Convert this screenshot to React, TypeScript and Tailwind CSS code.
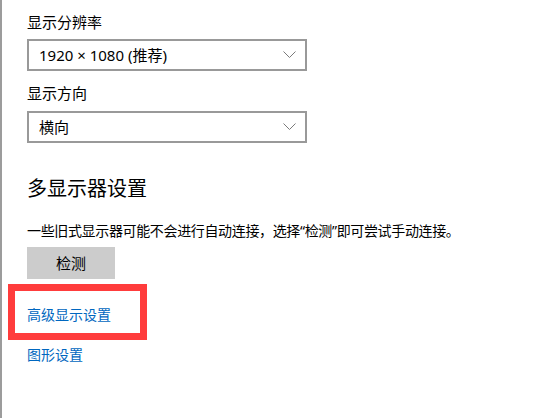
import React from 'react';

const Chevron: React.FC = () => (
  <svg width="13" height="8" viewBox="0 0 13 8" fill="none">
    <path d="M0.5 0.5 L6.5 6.5 L12.5 0.5" stroke="#7a7a7a" strokeWidth="1" />
  </svg>
);

const Select: React.FC<{ value: string; className?: string }> = ({ value, className }) => (
  <div className={`w-[280px] h-[32px] border-2 border-[#999999] flex items-center justify-between pl-[10px] pr-[9px] text-[15px] text-black ${className ?? ''}`}>
    <span className="leading-[20px]">{value}</span>
    <Chevron />
  </div>
);

const App: React.FC = () => {
  return (
    <div
      className="relative w-[535px] h-[418px] bg-white border-l-2 border-[#9c9c9c] pl-[25px] overflow-hidden"
      style={{ fontFamily: '"Noto Sans", "Noto Sans CJK SC", sans-serif' }}
    >
      <div className="pt-[12px] text-[15px] leading-[20px] text-black">显示分辨率</div>
      <Select value="1920 × 1080 (推荐)" className="mt-[7px]" />

      <div className="mt-[12px] text-[15px] leading-[20px] text-black">显示方向</div>
      <Select value="横向" className="mt-[8px]" />

      <h2 className="mt-[32px] text-[20px] leading-[28px] text-black">多显示器设置</h2>
      <p className="mt-[18px] text-[14px] leading-[20px] tracking-[-0.35px] text-black">
        一些旧式显示器可能不会进行自动连接，选择“检测”即可尝试手动连接。
      </p>
      <button className="mt-[6px] w-[88px] h-[32px] bg-[#cccccc] text-[15px] text-black flex items-center justify-center">
        检测
      </button>

      <div className="mt-[26px] text-[14px] leading-[20px] text-[#0067c0]">高级显示设置</div>
      <div className="mt-[20px] text-[14px] leading-[20px] text-[#0067c0]">图形设置</div>

      {/* annotation box */}
      <div className="absolute left-[6px] top-[284px] w-[139px] h-[56px] border-[7px] border-[#ff3c3c]" />
    </div>
  );
};

export default App;
